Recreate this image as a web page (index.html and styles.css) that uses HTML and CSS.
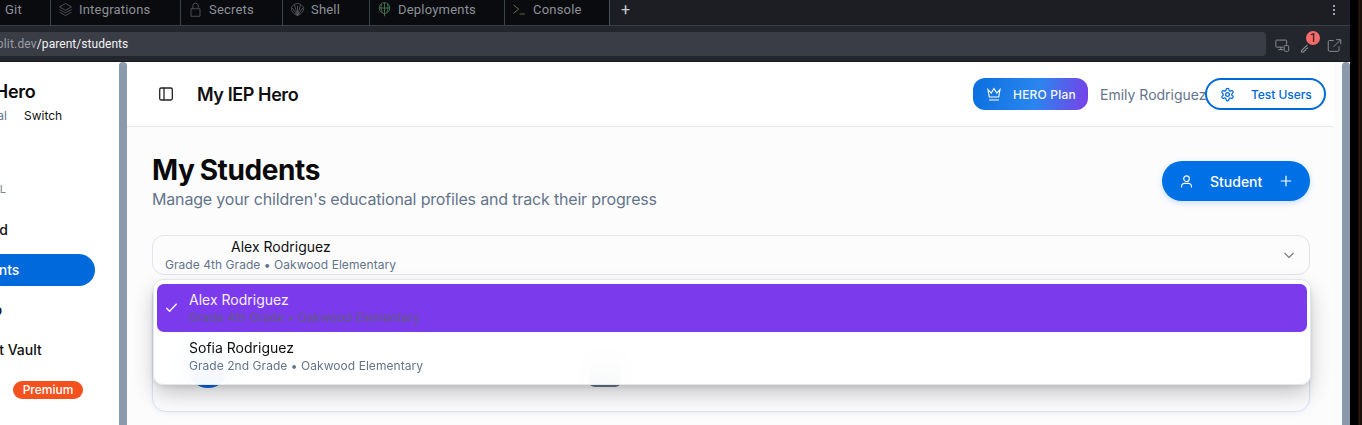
FILE: index.html
```html
<!DOCTYPE html>
<html lang="en">
<head>
<meta charset="utf-8">
<title>My IEP Hero</title>
<link rel="stylesheet" href="styles.css">
</head>
<body>
<div class="win">
<div class="tabs">
  <div class="tab tab-git">Git</div>
  <div class="tab tab-int">
    <svg class="ti" viewBox="0 0 20 20"><path d="M10 2l8 4.500-8 4.500-8-4.500zM2 10l8 4.500 8-4.500M2 13.500L10 18l8-4.500"/></svg>
    Integrations</div>
  <div class="tab tab-sec">
    <svg class="ti" viewBox="0 0 20 20"><path d="M4 9h12v10H4zM6.500 9V5a3.500 3.500 0 0 1 7 0v4"/></svg>
    Secrets</div>
  <div class="tab tab-shell">
    <svg class="ti" viewBox="0 0 20 20"><path d="M10 18C5 16 1 12 2 7c2-3 5-5 8-5s6 2 8 5c1 5-3 9-8 11zM10 18V5M10 18L6 4M10 18l4-14M10 18L3 8M10 18l7-10"/></svg>
    Shell</div>
  <div class="tab tab-dep">
    <svg class="ti ti-green" viewBox="0 0 20 20"><path d="M10 1a7 7 0 0 1 3 13.300L10 16l-3-1.700A7 7 0 0 1 10 1zM3 8h14M10 1v18M6 3c-1 4-1 7 1 11M14 3c1 4 1 7-1 11"/></svg>
    Deployments</div>
  <div class="tab tab-con">
    <svg class="ti ti-tan" viewBox="0 0 20 20"><path d="M2 4l7 5.500L2 15M10 16h7"/></svg>
    Console</div>
  <div class="tab-plus">+</div>
  <div class="kebab"><i></i><i></i><i></i></div>
</div>
<div class="addr">
  <div class="url"><span class="url-dim">replit.dev</span>/parent/students</div>
  <div class="addr-icons">
    <svg class="ai" viewBox="0 0 18 18"><path d="M14 8V3.500a1 1 0 0 0-1-1H2a1 1 0 0 0-1 1V10a1 1 0 0 0 1 1h8M4 14h6M7 11v3"/><rect x="11" y="9" width="5.500" height="7" rx="1.500"/></svg>
    <div class="key">
      <svg class="ai ai-key" viewBox="0 0 18 18"><path d="M1.500 15.500v1.500h2.500l.5-1.500 1.500-.5.5-1.500 2-1M1.500 15.500L8 9.500"/></svg>
      <span class="key-badge">1</span>
    </div>
    <svg class="ai" viewBox="0 0 18 18"><path d="M8 3H3a1.500 1.500 0 0 0-1.500 1.500v10A1.500 1.500 0 0 0 3 16h10a1.500 1.500 0 0 0 1.500-1.500V10M8 10.500L16 2.500M11 2h5.500v5.500"/></svg>
  </div>
</div>
<div class="app">
  <aside class="side">
    <div class="side-in">
      <div class="brand">My IEP Hero</div>
      <div class="switch"><span class="portal">Parent Portal</span><span class="sw">Switch</span></div>
      <div class="side-label">PORTAL</div>
      <nav class="nav">
        <div class="nav-item">Dashboard</div>
        <div class="nav-item active">My Students</div>
        <div class="nav-item">Road Map</div>
        <div class="nav-item">Document Vault</div>
        <div class="nav-prem"><span class="prem">Premium</span></div>
      </nav>
    </div>
  </aside>
  <div class="strip"></div>
  <main class="main">
    <header class="head">
      <svg class="panel" viewBox="0 0 16 16"><rect x="1.700" y="2" width="12.600" height="12" rx="1.500"/><path d="M6 2v12"/></svg>
      <div class="app-title">My IEP Hero</div>
      <div class="head-right">
        <div class="plan">
          <svg class="crown" viewBox="0 0 18 18"><path d="M3 4.500l3.200 3.500L9 3.500 11.800 8 15 4.500l-1.300 7.500H4.300zM4 15h10"/></svg>
          HERO Plan</div>
        <div class="user">Emily Rodriguez</div>
        <div class="test">
          <svg class="gear" viewBox="0 0 24 24"><path d="M12.220 2h-.44a2 2 0 0 0-2 2v.18a2 2 0 0 1-1 1.730l-.43.25a2 2 0 0 1-2 0l-.15-.08a2 2 0 0 0-2.730.73l-.22.38a2 2 0 0 0 .73 2.730l.15.1a2 2 0 0 1 1 1.720v.51a2 2 0 0 1-1 1.740l-.15.09a2 2 0 0 0-.73 2.730l.22.38a2 2 0 0 0 2.730.73l.15-.08a2 2 0 0 1 2 0l.43.25a2 2 0 0 1 1 1.730V20a2 2 0 0 0 2 2h.44a2 2 0 0 0 2-2v-.18a2 2 0 0 1 1-1.730l.43-.25a2 2 0 0 1 2 0l.15.08a2 2 0 0 0 2.730-.73l.22-.39a2 2 0 0 0-.73-2.730l-.15-.08a2 2 0 0 1-1-1.740v-.5a2 2 0 0 1 1-1.740l.15-.09a2 2 0 0 0 .73-2.730l-.22-.38a2 2 0 0 0-2.730-.73l-.15.08a2 2 0 0 1-2 0l-.43-.25a2 2 0 0 1-1-1.730V4a2 2 0 0 0-2-2z"/><circle cx="12" cy="12" r="3"/></svg>
          Test Users</div>
      </div>
    </header>
    <section class="content">
      <div class="title-row">
        <div>
          <h1 class="h1">My Students</h1>
          <p class="sub">Manage your children's educational profiles and track their progress</p>
        </div>
        <div class="add">
          <svg class="uicon" viewBox="0 0 16 16"><circle cx="8" cy="5" r="3"/><path d="M2.800 14.500v-1.500A3 3 0 0 1 5.800 10h4.400a3 3 0 0 1 3 3v1.500"/></svg>
          <span class="add-label">Student</span>
          <svg class="plus" viewBox="0 0 16 16"><path d="M8 2v12M2 8h12"/></svg>
        </div>
      </div>
      <div class="select-wrap">
        <div class="select">
          <div class="sel-name">Alex Rodriguez</div>
          <div class="sel-meta">Grade 4th Grade • Oakwood Elementary</div>
          <svg class="chev" viewBox="0 0 16 16"><path d="M3.500 6l4.500 4.500L12.500 6"/></svg>
        </div>
        <div class="menu">
          <div class="opt opt-on">
            <svg class="check" viewBox="0 0 16 16"><path d="M2.500 8.500l3.500 3.500 7.500-8"/></svg>
            <div class="opt-name">Alex Rodriguez</div>
            <div class="opt-meta">Grade 4th Grade • Oakwood Elementary</div>
          </div>
          <div class="opt">
            <div class="opt-name">Sofia Rodriguez</div>
            <div class="opt-meta">Grade 2nd Grade • Oakwood Elementary</div>
          </div>
        </div>
      </div>
      <div class="card">
        <div class="avatar"></div>
        <div class="chip"></div>
      </div>
    </section>
  </main>
  <div class="gutter"></div>
  <div class="strip"></div>
</div>
</div>
<div class="edge"></div>
</body>
</html>
```
FILE: styles.css
```css
* { box-sizing: border-box; }
html, body { margin: 0; height: 425px; overflow: hidden; }
body { font-family: Inter, "Liberation Sans", sans-serif; background: #000; display: flex; }
.win { width: 1350px; flex: none; display: flex; flex-direction: column; }
.edge { flex: 1; background: linear-gradient(90deg, #000 0, #000 8px, #2e1c0f 9px, #1a0f08 11px); }

.tabs { height: 26px; flex: none; display: flex; align-items: stretch; background: #1c1e24; border-bottom: 1px solid #3a3e47; color: #8d9196; font: 13px/19px Roboto, sans-serif; letter-spacing: .2px; }
.tab { display: flex; align-items: center; gap: 6px; padding-bottom: 7px; background: #0a0b0f; border-right: 1px solid #3a4150; white-space: nowrap; }
.tab-git { width: 51px; padding-left: 5px; }
.tab-int { width: 130px; padding-left: 7px; }
.tab-sec { width: 102px; padding-left: 7px; }
.tab-shell { width: 87px; padding-left: 7px; }
.tab-dep { width: 135px; padding-left: 7px; }
.tab-con { width: 105px; padding-left: 7px; border-right-color: #4a505c; }
.ti { width: 15px; height: 15px; flex: none; fill: none; stroke: #5f6368; stroke-width: 1; }
.ti-green { stroke: #4f8a5b; }
.ti-tan { stroke: #8a8468; }
.tab-plus { padding-left: 11px; color: #c8cbd0; font-size: 16px; line-height: 20px; }
.kebab { margin-left: auto; width: 17px; display: flex; flex-direction: column; justify-content: center; align-items: flex-start; gap: 2px; padding-bottom: 5px; }
.kebab i { width: 2px; height: 2px; background: #c9ccd2; border-radius: 50%; }

.addr { height: 36px; flex: none; display: flex; align-items: flex-start; padding-top: 6px; background: #23262c; border-bottom: 1px solid #16181c; }
.url { width: 1266px; height: 24px; background: #3a3d45; border-radius: 0 4px 4px 0; color: #f2f3f5; font: 12px/24px Roboto, sans-serif; letter-spacing: .05px; overflow: hidden; white-space: nowrap; }
.url-dim { color: #9a9ea6; margin-left: -14px; letter-spacing: .2px; }
.addr-icons { display: flex; align-items: center; gap: 10px; padding: 5px 0 0 9px; }
.ai { width: 15px; height: 15px; display: block; fill: none; stroke: #8f939b; stroke-width: 1.100; }
.ai-key { width: 17px; height: 17px; margin-top: -1px; }
.key { position: relative; width: 17px; }
.key-badge { position: absolute; left: 6px; top: -6px; width: 14px; height: 14px; border-radius: 50%; background: #f56a6a; color: #2a1414; font: 12px/14px Roboto, sans-serif; text-align: center; }

.app { flex: 1; min-height: 0; display: flex; background: #fff; }
.side { width: 119px; flex: none; overflow: hidden; background: #fff; }
.side-in { width: 240px; margin-left: -121px; }
.brand { font-size: 18px; font-weight: 600; line-height: 24px; margin-top: 18px; padding-left: 54px; letter-spacing: -.3px; color: #0a0a0a; white-space: nowrap; }
.switch { font-size: 12px; line-height: 18px; margin-top: 3px; white-space: nowrap; display: flex; }
.portal { width: 145px; color: #64748b; text-align: right; padding-right: 17px; }
.sw { color: #111; }
.side-label { font-size: 11px; line-height: 14px; letter-spacing: 1px; color: #7b8494; margin-top: 57px; text-align: right; width: 128px; }
.nav { margin-top: 18px; display: flex; flex-direction: column; gap: 8px; width: 216px; }
.nav-item { height: 32px; border-radius: 0 16px 16px 0; font-size: 14px; line-height: 32px; font-weight: 500; padding-left: 56px; color: #111; white-space: nowrap; }
.nav-item.active { background: #0069dc; color: #fff; }
.nav-prem { height: 32px; padding-left: 134px; display: flex; align-items: center; }
.prem { width: 70px; height: 18px; background: #f4511e; color: #fff; border-radius: 9px; font-size: 12px; line-height: 18px; font-weight: 500; text-align: center; }

.strip { width: 8px; flex: none; background: #8a99ab; border-radius: 4px 4px 0 0; }
.gutter { width: 8px; flex: none; background: #fbfbfc; }
.main { width: 1207px; flex: none; background: #fcfcfd; display: flex; flex-direction: column; min-height: 0; }

.head { height: 65px; flex: none; display: flex; align-items: center; padding: 0 8px 0 31px; border-bottom: 1px solid #e3e6ec; background: #fff; }
.panel { width: 16px; height: 16px; fill: none; stroke: #222; stroke-width: 1.300; }
.app-title { margin-left: 23px; font-size: 18px; font-weight: 600; letter-spacing: -.4px; color: #0f0f10; }
.head-right { margin-left: auto; display: flex; align-items: center; }
.plan { width: 115px; height: 32px; border-radius: 12px; background: linear-gradient(100deg, #0b6fdf 0, #2a86ee 55%, #7a3fe8 100%); color: #f4f8ff; font-size: 12px; font-weight: 500; letter-spacing: .2px; display: flex; align-items: center; gap: 10px; padding-left: 12px; white-space: nowrap; }
.crown { width: 18px; height: 18px; fill: none; stroke: #fff; stroke-width: 1.100; }
.user { margin-left: 12px; width: 105px; white-space: nowrap; color: #64748b; font-size: 14px; }
.test { width: 121px; height: 32px; border: 2px solid #0069dc; border-radius: 16px; background: #fff; color: #0069dc; font-size: 12px; font-weight: 500; letter-spacing: -.05px; display: flex; align-items: center; gap: 16px; padding-left: 13px; white-space: nowrap; }
.gear { width: 15px; height: 15px; fill: none; stroke: #0069dc; stroke-width: 2; }

.content { flex: 1; min-height: 0; padding: 25px 24px 0 25px; overflow: hidden; }
.title-row { display: flex; justify-content: space-between; align-items: flex-start; height: 83px; }
.h1 { margin: 0; font-size: 28px; line-height: 36px; font-weight: 700; letter-spacing: -.4px; word-spacing: -1px; color: #0a0a0a; }
.sub { margin: -1px 0 0; font-size: 16px; line-height: 24px; letter-spacing: -.17px; color: #64748b; }
.add { margin-top: 9px; width: 148px; height: 40px; border-radius: 20px; background: #0070e6; color: #fff; display: flex; align-items: center; padding: 0 17px; font-size: 14px; font-weight: 500; box-shadow: 0 2px 6px rgba(0,105,220,.2); }
.uicon { width: 15px; height: 15px; fill: none; stroke: #fff; stroke-width: 1.200; }
.add-label { margin-left: 16px; flex: 1; }
.plus { width: 14px; height: 14px; fill: none; stroke: #fff; stroke-width: 1.400; }

.select-wrap { position: relative; z-index: 2; }
.select { position: relative; height: 40px; border: 1px solid #e2e4ea; border-radius: 12px; background: #fcfcfd; padding: 1px 12px 0; }
.sel-name { font-size: 14px; line-height: 20px; padding-left: 66px; color: #0f0f10; }
.sel-meta { font-size: 12px; line-height: 16px; color: #64748b; letter-spacing: .05px; }
.chev { position: absolute; right: 12px; top: 11px; width: 16px; height: 16px; fill: none; stroke: #777; stroke-width: 1.200; }
.menu { position: absolute; left: 1px; right: -1px; top: 44px; height: 106px; background: rgba(255,255,255,.95); backdrop-filter: blur(16px); border: 1px solid #e4e6ea; border-radius: 10px; padding: 4px 3px; box-shadow: 0 10px 22px -2px rgba(0,0,0,.24), 0 2px 4px rgba(0,0,0,.08); }
.opt { position: relative; height: 48px; border-radius: 7px; padding: 6px 0 0 32px; }
.opt-on { background: #7c3aed; }
.check { position: absolute; left: 7px; top: 16px; width: 15px; height: 15px; fill: none; stroke: #fff; stroke-width: 1.300; }
.opt-name { font-size: 14px; line-height: 20px; color: #0f0f10; }
.opt-meta { font-size: 12px; line-height: 16px; color: #64748b; letter-spacing: .05px; }
.opt-on .opt-name { color: #f5f0ff; }
.opt-on .opt-meta { color: #5e5c80; }

.card { position: relative; margin-top: 8px; height: 129px; border: 1px solid #d9e4f3; border-radius: 14px; background: #fcfcfe; box-shadow: 0 2px 4px rgba(80,130,220,.08); }
.avatar { position: absolute; left: 35px; top: 64px; width: 40px; height: 40px; border-radius: 50%; background: #0069dc; }
.chip { position: absolute; left: 436px; top: 79px; width: 32px; height: 24px; border-radius: 6px; background: #64788f; }
```
